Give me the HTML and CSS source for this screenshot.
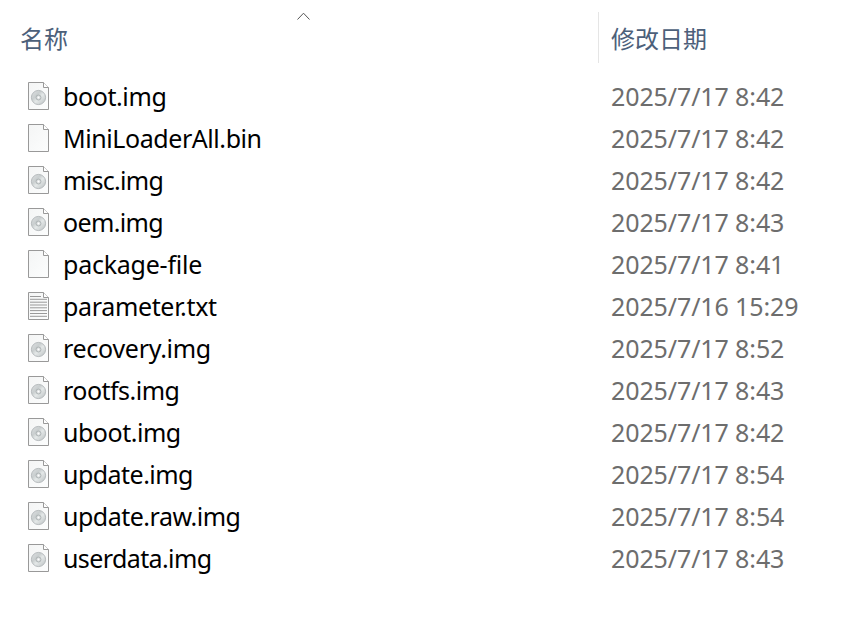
FILE: index.html
```
<!DOCTYPE html>
<html lang="zh-CN">
<head>
<meta charset="utf-8">
<title>文件</title>
<link rel="stylesheet" href="styles.css">
</head>
<body>
<svg class="defs" width="0" height="0">
<defs>
<linearGradient id="disc" x1="0" y1="0" x2="1" y2="1"><stop offset="0" stop-color="#dfe2e3"/><stop offset=".35" stop-color="#c9cecf"/><stop offset=".55" stop-color="#e4e8e8"/><stop offset="1" stop-color="#b9bfc0"/></linearGradient>
<linearGradient id="paper" x1="0" y1="0" x2="1" y2="1"><stop offset="0" stop-color="#f4f5f5"/><stop offset="1" stop-color="#fcfdfd"/></linearGradient>
</defs>
<symbol id="page" viewBox="0 0 21 28"><path d="M.5.5H15.500L20.500 5.500V27.500H.5Z" fill="url(#paper)" stroke="#999"/><path d="M15.500.5V5.500H20.500" fill="#fff" stroke="#999"/></symbol>
<symbol id="image" viewBox="0 0 21 28"><use href="#page"/><circle cx="10.500" cy="15.500" r="7.100" fill="url(#disc)" stroke="#a9afb1" stroke-width=".8"/><circle cx="10.500" cy="15.500" r="2.500" fill="#d8dcdd" stroke="#a3a9ab" stroke-width=".8"/><circle cx="10.500" cy="15.500" r="1" fill="#fff"/></symbol>
<symbol id="text" viewBox="0 0 21 28"><use href="#page"/><path d="M2 4.500H13M2 7.300H19M2 10.200H19M2 13H19M2 15.800H19M2 18.600H19M2 21.500H19M2 24.300H19" stroke="#999"/></symbol>
</svg>
<main class="files">
<header class="head"><span class="name-head">名称</span><svg class="sort" viewBox="0 0 14 8"><path d="M.5 7.500L6.500 1.200L12.500 7.500"/></svg><span class="date-head">修改日期</span></header>
<div class="rows" id="rows"></div>
</main>
<script src="files.js"></script>
</body>
</html>
```
FILE: styles.css
```
body{margin:0;background:#fff;color:#000;font-family:"Noto Sans","Noto Sans CJK SC",sans-serif}
.defs{position:absolute}
.files{width:861px;height:639px;overflow:hidden}
.head{position:relative;display:grid;grid-template-columns:578px 1fr;height:63px;padding:12px 0 0 20px;box-sizing:border-box;color:#4c607a;font:24px/51px "Noto Sans CJK SC",sans-serif}
.date-head{border-left:1px solid #e5e5e5;padding-left:12px}
.sort{position:absolute;left:297px;top:12px;width:14px;height:8px;fill:none;stroke:#555}
.rows{padding-top:12px}
.row{display:grid;grid-template-columns:35px 548px 1fr;align-items:center;height:42px;padding-left:28px;font-size:25px;line-height:42px;white-space:nowrap}
.icon{width:21px;height:28px;display:block}
.date{color:#6d6d6d;letter-spacing:-.11px}
```
FILE: files.js
```
// name, modified, icon, name tracking in px
const files = [
  ["boot.img", "2025/7/17 8:42", "image", -.4],
  ["MiniLoaderAll.bin", "2025/7/17 8:42", "page", -.43],
  ["misc.img", "2025/7/17 8:42", "image", -.68],
  ["oem.img", "2025/7/17 8:43", "image", -.65],
  ["package-file", "2025/7/17 8:41", "page", -.24],
  ["parameter.txt", "2025/7/16 15:29", "text", -.34],
  ["recovery.img", "2025/7/17 8:52", "image", -.28],
  ["rootfs.img", "2025/7/17 8:43", "image", -.52],
  ["uboot.img", "2025/7/17 8:42", "image", -.48],
  ["update.img", "2025/7/17 8:54", "image", -.53],
  ["update.raw.img", "2025/7/17 8:54", "image", -.5],
  ["userdata.img", "2025/7/17 8:43", "image", -.6]
];
document.getElementById("rows").innerHTML = files.map(([name, date, icon, tracking]) =>
  `<div class="row"><svg class="icon"><use href="#${icon}"/></svg><span class="name" style="letter-spacing:${tracking}px">${name}</span><span class="date">${date}</span></div>`
).join("");
```
